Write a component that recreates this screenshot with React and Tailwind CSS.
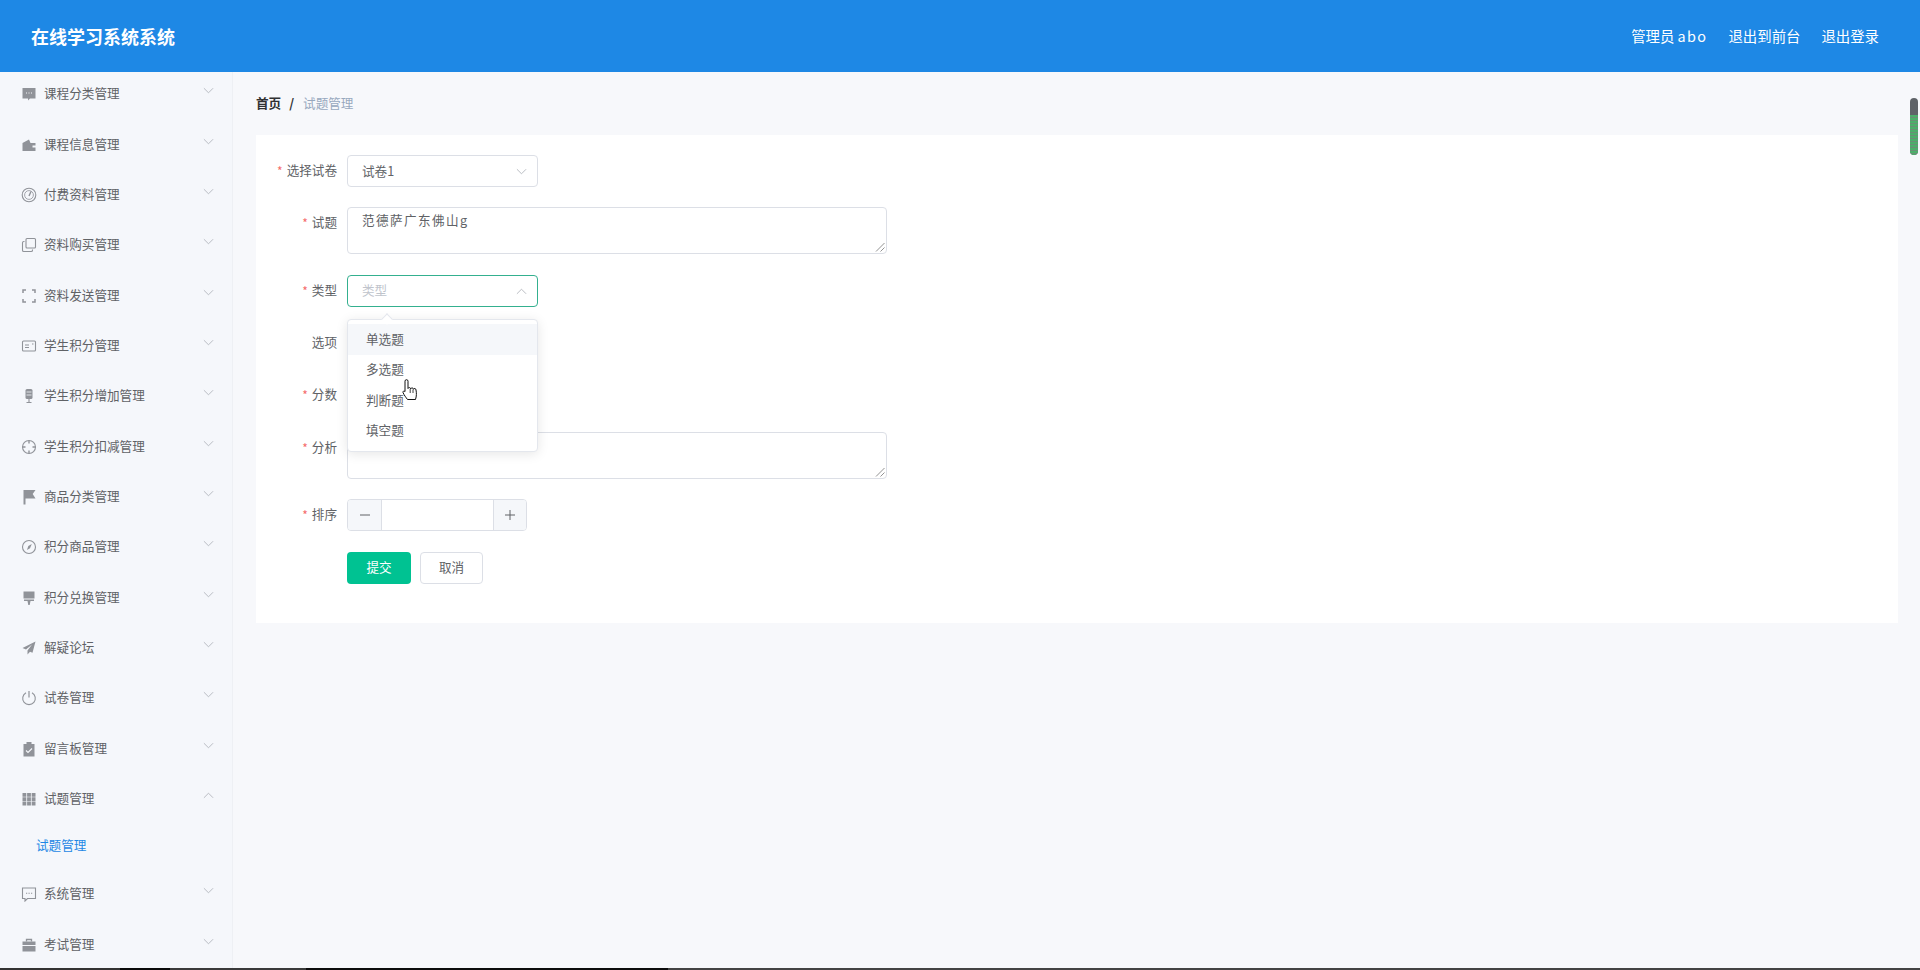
import React from "react";

const F = "#909399";
const Ic = ({ children }) => (
  <svg width="16" height="16" viewBox="0 0 16 16" className="shrink-0" fill="none" stroke={F} strokeWidth="1.1">
    {children}
  </svg>
);

const icons = [
  <Ic><path d="M1.500 2h13v10.500H9l-2 2v-2H1.500z" fill={F} stroke="none" /><path d="M5 7h1M7.500 7h1M10 7h1" stroke="#f5f7fb" strokeWidth="1.200" /></Ic>,
  <Ic><path d="M1.500 6l6.500-3.500L9.500 6h5v2.500h-3v2h3V14h-13z" fill={F} stroke="none" /></Ic>,
  <Ic><circle cx="8" cy="8" r="6.800" /><circle cx="8" cy="8" r="4.400" strokeWidth=".8" /><path d="M10 4.500L8 9" strokeWidth="1.400" /></Ic>,
  <Ic><rect x="5" y="1.500" width="9.500" height="9.500" rx="1" /><path d="M3.500 4.500H2.800a1.300 1.300 0 00-1.300 1.300v7.400a1.300 1.300 0 001.300 1.300h7.400a1.300 1.300 0 001.300-1.300v-.7" /></Ic>,
  <Ic><path d="M5 2H2v3M11 2h3v3M5 14H2v-3M11 14h3v-3" strokeWidth="1.500" /></Ic>,
  <Ic><rect x="1.500" y="3" width="13" height="10" rx="1" /><path d="M4 7h4M4 9.500h4M11 6h1.500" /></Ic>,
  <Ic><rect x="4.500" y="1" width="7" height="10" rx="1.500" fill={F} stroke="none" /><path d="M5.500 4h5M5.500 7h5" stroke="#f5f7fb" strokeWidth=".8" /><path d="M8 11v3M5.500 14.500h5" /></Ic>,
  <Ic><circle cx="8" cy="8" r="6.500" /><path d="M8 1.500v3M8 11.500v3M1.500 8h3M11.500 8h3" strokeWidth="1.400" /></Ic>,
  <Ic><path d="M2.500 1h12l-2.800 4 2.800 4.500H4.500V15.500h-2z" fill={F} stroke="none" /></Ic>,
  <Ic><circle cx="8" cy="8" r="6.500" /><path d="M10.800 5L9 9.200 6 11l1.300-4z" fill={F} stroke="none" /></Ic>,
  <Ic><path d="M2.500 1.500h11v7h-11z" fill={F} stroke="none" /><path d="M3 9.500h10v1.500H9.500l-.8 4H7.300l-.8-4H3z" fill={F} stroke="none" /></Ic>,
  <Ic><path d="M14.500 1.500L1.500 8l3.500 1.500 6-5-4.500 6v4l2.500-2.800 2.500 1z" fill={F} stroke="none" /></Ic>,
  <Ic><path d="M8 1v6.500" strokeWidth="1.200" /><path d="M5 2.800a6.300 6.300 0 106 0" /></Ic>,
  <Ic><path d="M2.500 3H5.500V1h5V3h3v12.500h-11z" fill={F} stroke="none" /><path d="M5 9.500l2 2 4-4" stroke="#f5f7fb" /></Ic>,
  <Ic><path d="M1.500 2h3.800v3.800H1.500zM6.100 2h3.800v3.800H6.100zM10.700 2h3.800v3.800h-3.800zM1.500 6.300h3.800v3.800H1.500zM6.100 6.300h3.800v3.800H6.100zM10.700 6.300h3.800v3.800h-3.800zM1.500 10.600h3.800v3.800H1.500zM6.100 10.600h3.800v3.800H6.100zM10.700 10.600h3.800v3.800h-3.800z" fill={F} stroke="none" /></Ic>,
  <Ic><path d="M1.500 2h13v10.500H6.500L4 15v-2.500H1.500z" /><path d="M5 7.300h1.200M7.500 7.300h1.200M10 7.300h1.200" /></Ic>,
  <Ic><path d="M1.500 4.500h13V8h-13zM1.500 9h13v5.500h-13z" fill={F} stroke="none" /><path d="M5.500 4.500V2.500h5v2" strokeWidth="1.300" /></Ic>,
];

const names = ["课程分类管理","课程信息管理","付费资料管理","资料购买管理","资料发送管理","学生积分管理","学生积分增加管理","学生积分扣减管理","商品分类管理","积分商品管理","积分兑换管理","解疑论坛","试卷管理","留言板管理","试题管理","系统管理","考试管理"];

const Chevron = ({ up, color = "#b4b7bd", size = 11 }) => (
  <svg width={size} height={size} viewBox="0 0 12 12" fill="none" stroke={color} strokeWidth="1">
    <path d={up ? "M1 8.500l5-5 5 5" : "M1 3.500l5 5 5-5"} />
  </svg>
);

const Label = ({ req, children, h = "h-8" }) => (
  <div className={`w-[81px] shrink-0 ${h} flex items-center justify-end gap-1 text-[12.600px] text-[#606266]`}>
    {req && <span className="text-[#f56c6c] text-[12px]">*</span>}
    <span className="-mt-[1px]">{children}</span>
  </div>
);

const Grip = () => (
  <svg className="absolute right-[1px] bottom-[1px]" width="10" height="10" viewBox="0 0 10 10" stroke="#777" strokeWidth=".8">
    <path d="M1 9.500L9.500 1M5.500 9.500L9.500 5.500" />
  </svg>
);

const Area = ({ children }) => (
  <div className="relative w-[540px] h-[47px] bg-white border border-[#dcdfe6] rounded-[4px] px-[14px] pt-[2px] text-[12.600px] leading-[20px] tracking-[1.400px] text-[#606266]">
    {children}
    <Grip />
  </div>
);

const taskbar = [
  ["w-[120px]", "bg-[#333333]"], ["w-[50px]", "bg-[#0a0a0a]"], ["w-[136px]", "bg-[#3a3a3a]"],
  ["w-[362px]", "bg-[#0d0d0d]"], ["flex-1", "bg-[#444444]"],
];

export default function App() {
  return (
    <div className="w-full h-[970px] overflow-hidden relative bg-[#f7f8fb] flex flex-col" style={{ fontFamily: '"Noto Sans CJK SC", "Liberation Sans", sans-serif' }}>
      <header className="h-[72px] shrink-0 bg-[#1e88e5] flex items-center justify-between pl-[31px] pr-[41px] text-white">
        <div className="text-[18px] font-bold">在线学习系统系统</div>
        <div className="flex items-center gap-[21px] text-[14.400px] pb-[1px]">
          <span>管理员 <span className="tracking-[1.400px]">abo</span></span>
          <span>退出到前台</span>
          <span>退出登录</span>
        </div>
      </header>
      <div className="flex flex-1 min-h-0">
        <aside className="w-[233px] shrink-0 bg-[#f5f7fb] border-r border-[#eef0f4] overflow-hidden">
          <div className="-mt-[3px] flex flex-col">
            {names.map((n, i) => (
              <React.Fragment key={n}>
                <div className="h-[50.350px] shrink-0 flex items-center pl-[21px] pr-[18px] text-[12.600px] text-[#606266]">
                  {icons[i]}
                  <span className="ml-[7px] flex-1 -mt-[1px]">{n}</span>
                  <span className="-mt-[7px]"><Chevron up={i === 14} /></span>
                </div>
                {i === 14 && (
                  <div className="h-[45px] shrink-0 flex items-center pl-[36px] pb-[3px] text-[12.600px] text-[#1e88e5]">试题管理</div>
                )}
              </React.Fragment>
            ))}
          </div>
        </aside>
        <main className="flex-1 min-w-0 pl-[23px] pr-[22px]">
          <div className="h-[63px] flex items-center pb-[1px] text-[12.600px]">
            <span className="font-bold text-[#303133]">首页</span>
            <span className="ml-[8px] mr-[9px] font-bold text-[#303133]">/</span>
            <span className="text-[#97a8be]">试题管理</span>
          </div>
          <div className="relative bg-white h-[488px] pt-[20px]">
            <div className="flex gap-[10px] mb-[20px]">
              <Label req>选择试卷</Label>
              <div className="w-[191px] h-8 border border-[#dcdfe6] rounded-[4px] flex items-center justify-between pl-[14px] pr-[10px] text-[12.600px] text-[#606266]">
                <span>试卷1</span><Chevron />
              </div>
            </div>
            <div className="flex gap-[10px] mb-[21px]">
              <Label req>试题</Label>
              <Area>范德萨广东佛山g</Area>
            </div>
            <div className="flex gap-[10px] mb-[20px]">
              <Label req>类型</Label>
              <div className="w-[191px] h-8 border border-[#34b08f] rounded-[4px] flex items-center justify-between pl-[14px] pr-[10px] text-[12.600px] text-[#c0c4cc]">
                <span className="-mt-[1px]">类型</span><Chevron up />
              </div>
            </div>
            <div className="flex gap-[10px] mb-[20px]">
              <Label>选项</Label>
            </div>
            <div className="flex gap-[10px] mb-[21px]">
              <Label req>分数</Label>
            </div>
            <div className="flex gap-[10px] mb-[20px]">
              <Label req>分析</Label>
              <Area />
            </div>
            <div className="flex gap-[10px] mb-[21px]">
              <Label req>排序</Label>
              <div className="w-[180px] h-8 border border-[#dcdfe6] rounded-[4px] flex overflow-hidden">
                <div className="w-[34px] bg-[#f5f7fa] border-r border-[#dcdfe6] flex items-center justify-center">
                  <svg width="12" height="12" viewBox="0 0 12 12" stroke="#606266"><path d="M1 6h10" /></svg>
                </div>
                <div className="flex-1 bg-white" />
                <div className="w-[33px] bg-[#f5f7fa] border-l border-[#dcdfe6] flex items-center justify-center">
                  <svg width="12" height="12" viewBox="0 0 12 12" stroke="#606266"><path d="M1 6h10M6 1v10" /></svg>
                </div>
              </div>
            </div>
            <div className="flex gap-[9px] ml-[91px]">
              <div className="w-[64px] h-8 rounded-[4px] bg-[#00c292] text-white text-[12.600px] flex items-center justify-center pb-[2px]">提交</div>
              <div className="w-[63px] h-8 rounded-[4px] border border-[#dcdfe6] bg-white text-[#606266] text-[12.600px] flex items-center justify-center pb-[2px]">取消</div>
            </div>

            <div className="absolute left-[91px] top-[184px] w-[191px] h-[133px] bg-white rounded-[4px] border border-[#e4e7ed] shadow-[0_2px_12px_rgba(0,0,0,0.1)] py-[4px] text-[12.600px] text-[#606266]">
              <div className="absolute -top-[5px] left-[35px] w-2 h-2 rotate-45 bg-white border-l border-t border-[#e4e7ed]" />
              <div className="h-[31px] bg-[#f5f7fa] flex items-center pl-[18px] pb-[1px]">单选题</div>
              <div className="h-[30.500px] flex items-center pl-[18px] pb-[1px]">多选题</div>
              <div className="h-[30.500px] flex items-center pl-[18px] pb-[1px]">判断题</div>
              <div className="h-[30.500px] flex items-center pl-[18px] pb-[1px]">填空题</div>
            </div>
            <svg className="absolute left-[146px] top-[244px]" width="17" height="24" viewBox="0 0 17 24">
              <path d="M3 2.200a1.500 1.500 0 013 0V9.500a1.400 1.400 0 012.700.3 1.400 1.400 0 012.700.400 1.400 1.400 0 012.600.800c.6 3 .6 6-.5 9.500H5.500C4 18.500 2 16 1 13.500c-.4-1.200 1-2 2-.9V2.200z" fill="#fff" stroke="#111" strokeWidth="1" />
              <path d="M8.200 10v4M11 10.500v3.500" stroke="#111" strokeWidth=".8" />
            </svg>
          </div>
        </main>
      </div>
      <div className="absolute right-[2px] top-[98px] w-2 h-[57px] rounded-full bg-[#5f6368] overflow-hidden flex flex-col justify-end">
        <div className="h-[40px] bg-[repeating-linear-gradient(to_bottom,#4caf6a_0,#4caf6a_2px,#6a8f76_2px,#6a8f76_3px)]" />
      </div>
      <div className="absolute left-0 right-0 bottom-0 h-[2px] flex">
        {taskbar.map(([w, c], i) => <div key={i} className={`${w} ${c}`} />)}
      </div>
    </div>
  );
}
